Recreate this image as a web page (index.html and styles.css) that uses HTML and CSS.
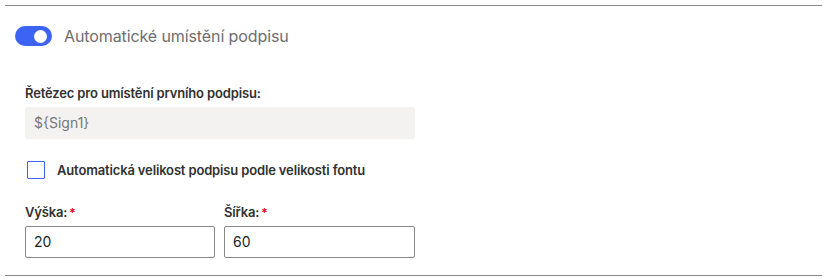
FILE: index.html
```html
<!DOCTYPE html>
<html lang="cs">
<head>
<meta charset="utf-8">
<link rel="stylesheet" href="styles.css">
</head>
<body>
<section class="panel">
  <div class="toggle-row">
    <span class="toggle"><span class="knob"></span></span>
    <span class="toggle-label">Automatické umístění podpisu</span>
  </div>
  <div class="field wide">
    <label class="label">Řetězec pro umístění prvního podpisu:</label>
    <div class="input disabled">${Sign1}</div>
  </div>
  <div class="check-row">
    <span class="checkbox"></span>
    <span class="check-label">Automatická velikost podpisu podle velikosti fontu</span>
  </div>
  <div class="size-row">
    <div class="field">
      <label class="label">Výška:<span class="req">*</span></label>
      <div class="input">20</div>
    </div>
    <div class="field">
      <label class="label">Šířka:<span class="req">*</span></label>
      <div class="input">60</div>
    </div>
  </div>
</section>
</body>
</html>
```
FILE: styles.css
```css
html, body { margin: 0; padding: 0; background: #fff; }
body { font-family: Inter, "Noto Sans", sans-serif; color: #323130; }
.panel {
  margin: 5px 1px 0 5px;
  border-top: 1px solid #8a8a8a;
  border-bottom: 1px solid #8a8a8a;
  padding: 20px 0 17px 10px;
}
.toggle-row { display: flex; align-items: center; height: 20px; }
.toggle {
  width: 37px; height: 20px; border-radius: 10px; background: #3d63f5;
  position: relative; flex: none;
}
.knob {
  position: absolute; width: 13px; height: 13px; border-radius: 50%;
  background: #fff; top: 3.5px; right: 5px;
}
.toggle-label { margin-left: 12px; font-size: 16px; color: #6e6e6e; letter-spacing: -0.1px; }
.field { display: flex; flex-direction: column; margin-left: 10px; }
.wide { width: 390px; margin-top: 38px; }
.label { font-size: 13px; font-weight: 600; line-height: 18px; margin-bottom: 5px; letter-spacing: -0.15px; }
.req { color: #e3001b; margin-left: 2px; font-size: 12px; }
.input {
  height: 32px; box-sizing: border-box; border: 1px solid #8a8886; border-radius: 2px;
  font-size: 14px; line-height: 30px; padding: 0 8px; color: #201f1e;
}
.input.disabled { background: #f3f2f1; border-color: #f3f2f1; color: #777; }
.check-row { display: flex; align-items: center; margin: 22px 0 0 12px; }
.checkbox {
  width: 18px; height: 18px; box-sizing: border-box; border: 1px solid #3d63f5;
  border-radius: 1px; flex: none;
}
.check-label { margin-left: 12px; font-size: 13px; font-weight: 600; letter-spacing: -0.15px; }
.size-row { display: flex; gap: 9px; margin-top: 24px; margin-left: 10px; }
.size-row .label { margin-bottom: 4px; }
.size-row .field { width: 190px; margin-left: 0; }
.size-row .field + .field { width: 191px; }
```
